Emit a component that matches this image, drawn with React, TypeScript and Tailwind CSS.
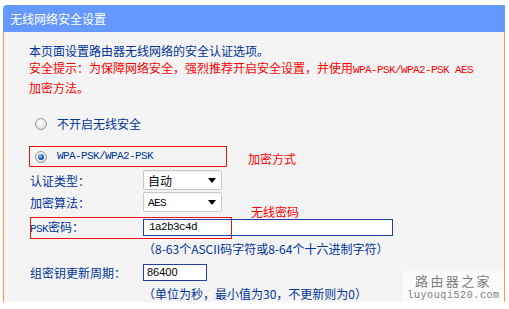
import type { ReactNode } from "react";

const mono = "font-['Liberation_Mono',monospace] text-[11px] tracking-[-0.6px]";

function Radio({ checked }: { checked?: boolean }) {
	return (
		<div className="flex h-[12px] w-[12px] items-center justify-center rounded-full border border-[#9a9a9a] bg-[radial-gradient(circle_at_40%_35%,#ffffff_0%,#e6e6e6_60%,#c9c9c9_100%)]">
			{checked && (
				<div className="h-[6px] w-[6px] rounded-full bg-[radial-gradient(circle_at_40%_35%,#8fd0ff_0%,#1d63a8_55%,#0b2d5c_100%)]" />
			)}
		</div>
	);
}

function Select({ children }: { children: ReactNode }) {
	return (
		<div className="flex h-[20px] w-[79px] items-center justify-between rounded-[2px] border border-[#c9c9c9] bg-white pl-[4px] pr-[5px] text-black shadow-[inset_0_1px_1px_rgba(0,0,0,0.06)]">
			<span>{children}</span>
			<svg width="8" height="5" viewBox="0 0 8 5">
				<polygon points="0,0 8,0 4,5" fill="#000" />
			</svg>
		</div>
	);
}

function Label({ children }: { children: ReactNode }) {
	return <div className="w-[114px] pl-[1px]">{children}</div>;
}

export default function App() {
	return (
		<div className="h-[309px] w-[509px] bg-white pl-[3px] pr-[4px] pt-[5px] font-['Noto_Sans_CJK_SC',sans-serif] text-[12px] leading-[17px] text-[#003399]">
			<div className="flex h-[27px] items-center rounded-tl-[4px] bg-[#6699ff] pl-[7px] pb-[1px] text-[12px] text-white">
				无线网络安全设置
			</div>
			<div className="relative flex h-[270px] flex-col border-x border-[#ff9933] bg-[#f4f4f4] pl-[25px]">
				<p className="pt-[10px]">
					本页面设置路由器无线网络的安全认证选项。
					<br />
					<span className="text-[#ff0000]">
						安全提示：为保障网络安全，强烈推荐开启安全设置，并使用
						<span className={mono}>WPA-PSK/WPA2-PSK AES</span>
						<br />
						加密方法。
					</span>
				</p>

				<div className="mt-[19px] flex h-[17px] items-center pl-[6px]">
					<Radio />
					<span className="ml-[10px]">不开启无线安全</span>
				</div>

				<div className="mt-[14px] flex">
					<div className="flex h-[21px] w-[198px] items-center border border-[#ee1111] pl-[5px]">
						<Radio checked />
						<span className={`${mono} ml-[10px]`}>WPA-PSK/WPA2-PSK</span>
					</div>
					<span className="ml-[21px] mt-[4px] text-[#ff0000]">加密方式</span>
				</div>

				<div className="mt-[3px] flex items-center">
					<Label>认证类型：</Label>
					<Select>自动</Select>
				</div>

				<div className="mt-[2px] flex items-center">
					<Label>加密算法：</Label>
					<Select>
						<span className={mono}>AES</span>
					</Select>
				</div>

				<div className="relative mt-[5px] flex h-[22px] items-center">
					<Label>
						<span className={mono}>PSK</span>密码：
					</Label>
					<div className="flex h-[17px] w-[250px] items-center border border-[#1f3fa8] bg-white pl-[5px] text-black">
						<span className={mono}>1a2b3c4d</span>
					</div>
					<div className="absolute left-[1px] top-0 h-[22px] w-[202px] border border-[#ee1111]" />
					<span className="absolute left-[222px] top-[-14px] text-[#ff0000]">无线密码</span>
				</div>

				<div className="ml-[114px] mt-[2px]">（8-63个ASCII码字符或8-64个十六进制字符）</div>

				<div className="mt-[7px] flex items-center">
					<Label>组密钥更新周期：</Label>
					<div className="flex h-[17px] w-[64px] items-center border border-[#1f3fa8] bg-white pl-[3px] font-['Liberation_Sans',sans-serif] text-[11px] text-black">
						86400
					</div>
				</div>

				<div className="ml-[114px] mt-[4px]">（单位为秒，最小值为30，不更新则为0）</div>

				<div className="absolute bottom-0 right-0 flex h-[31px] w-[101px] flex-col items-center justify-center bg-[#fbfbfb] text-[#7d7d7d]">
					<span className="block h-[19px] text-[13px] leading-[19px] tracking-[2.4px]">路由器之家</span>
					<span className="block h-[12px] font-['Liberation_Mono',monospace] text-[10px] leading-[12px] tracking-[0.6px]">
						luyouqi520.com
					</span>
				</div>
			</div>
		</div>
	);
}
